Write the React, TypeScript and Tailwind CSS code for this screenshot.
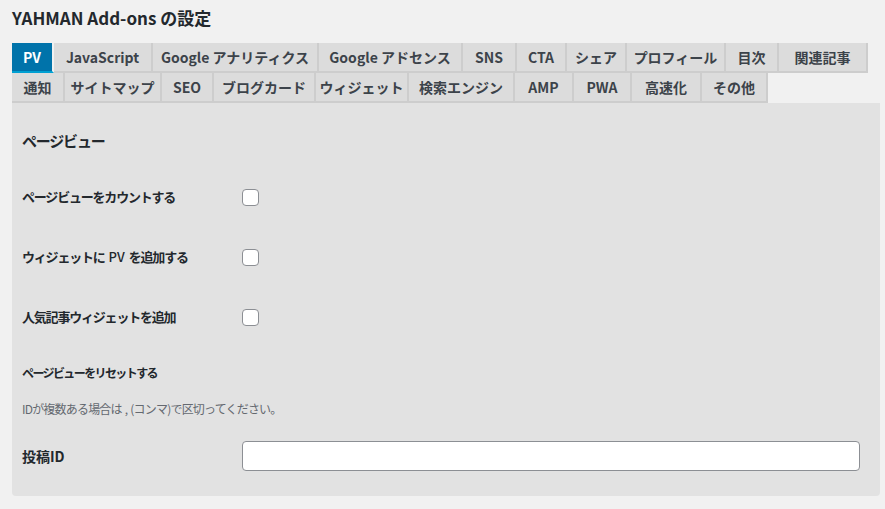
import React from "react";

const ROW1: [string, number][] = [
	["PV", 42],
	["JavaScript", 99],
	["Google アナリティクス", 166],
	["Google アドセンス", 144],
	["SNS", 54],
	["CTA", 50],
	["シェア", 60],
	["プロフィール", 99],
	["目次", 53],
	["関連記事", 89],
];

const ROW2: [string, number][] = [
	["通知", 53],
	["サイトマップ", 97],
	["SEO", 52],
	["ブログカード", 102],
	["ウィジェット", 93],
	["検索エンジン", 106],
	["AMP", 59],
	["PWA", 58],
	["高速化", 70],
	["その他", 66],
];

function Tab({label, width, active}: { label: string, width: number, active?: boolean }) {
	return (
		<div
			style={{width}}
			className={
				active
					? "h-[30px] flex items-center justify-center bg-[#0073aa] text-white border-b-2 border-[#00a0d2] border-r-2 border-r-[#f1f1f1] text-[14px] font-bold"
					: "h-[30px] flex items-center justify-center bg-[#dcdcdc] text-[#3c434a] border-r-2 border-b-2 border-[#cdcdcd] text-[14px] font-bold"
			}
		>
			{label}
		</div>
	);
}

function CheckRow({label}: { label: React.ReactNode }) {
	return (
		<div className="h-[60px] flex items-center">
			<div className="w-[220px] text-[13px] tracking-[-1.2px] font-semibold text-[#23282d]">{label}</div>
			<div className="w-[17px] h-[17px] rounded-[4px] border border-[#8c8f94] bg-white"/>
		</div>
	);
}

export default function App() {
	return (
		<div
			className="w-[885px] h-[509px] bg-[#f1f1f1] overflow-hidden"
			style={{fontFamily: '"Noto Sans CJK JP", "Noto Sans", sans-serif'}}
		>
			<div className="px-[12px]">
				<h1 className="h-[38px] pt-[6px] text-[17px] font-semibold text-[#23282d] leading-[24px]">
					YAHMAN Add-ons の設定
				</h1>
				<div className="flex flex-wrap mt-[5px] w-[868px]">
					{ROW1.map(([label, w], i) => (
						<Tab key={label} label={label} width={w} active={i === 0}/>
					))}
					{ROW2.map(([label, w]) => (
						<Tab key={label} label={label} width={w}/>
					))}
				</div>
				<div className="w-[868px] bg-[#e2e2e2] rounded-b-[4px] pl-[10px] pr-[20px] pt-[28px] pb-[25px]">
					<h2 className="h-[20px] leading-[20px] text-[15px] tracking-[-1.2px] font-bold text-[#23282d]">ページビュー</h2>
					<div className="mt-[16px]">
						<CheckRow label="ページビューをカウントする"/>
						<CheckRow label={<>ウィジェットに<span className="mx-[4px] tracking-normal font-medium">PV</span>を追加する</>}/>
						<CheckRow label="人気記事ウィジェットを追加"/>
					</div>
					<h3 className="mt-[16px] h-[20px] leading-[20px] text-[12px] tracking-[-1.6px] font-semibold text-[#23282d]">
						ページビューをリセットする
					</h3>
					<p className="mt-[17px] h-[18px] leading-[18px] text-[12px] tracking-[-0.8px] text-[#646970]">
						IDが複数ある場合は<span className="mx-[3px]">,</span>(コンマ)で区切ってください。
					</p>
					<div className="mt-[23px] flex items-center">
						<div className="w-[220px] text-[14px] font-bold text-[#23282d]">投稿ID</div>
						<input
							type="text"
							className="flex-1 h-[30px] rounded-[4px] border border-[#8c8f94] bg-white px-2 text-[14px]"
						/>
					</div>
				</div>
			</div>
		</div>
	);
}
